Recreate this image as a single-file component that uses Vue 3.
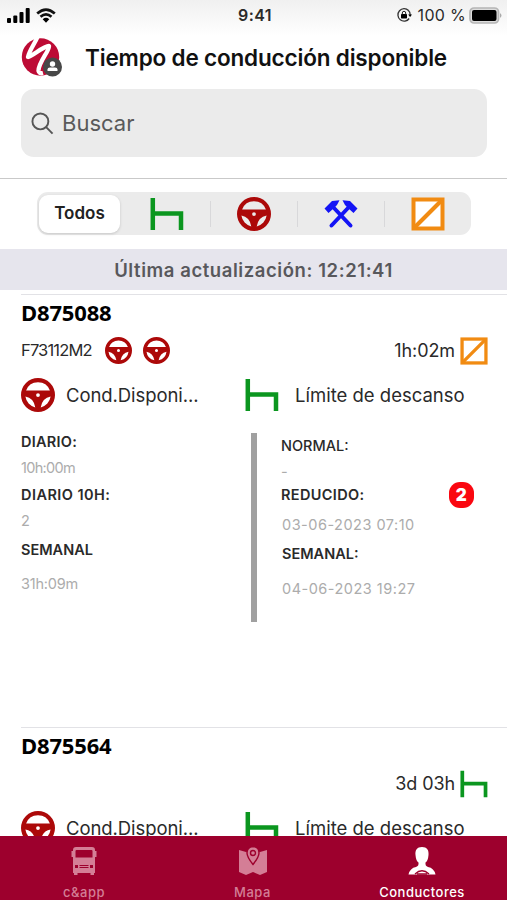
<template>
  <div class="screen">
    <!-- Shared icon shapes -->
    <svg class="sprite" aria-hidden="true">
      <symbol id="wheel" viewBox="0 0 34 34">
        <path fill="currentColor" fill-rule="evenodd" d="M17 0a17 17 0 1 0 0 34a17 17 0 1 0 0-34ZM5.100 12.600A12.700 12.700 0 0 1 28.900 12.600ZM4.400 18.600Q12.600 20 14.300 29.400A12.800 12.800 0 0 1 4.400 18.600ZM29.600 18.600Q21.400 20 19.700 29.400A12.800 12.800 0 0 0 29.600 18.600ZM17 15.200a1.900 1.900 0 1 0 0 3.800a1.900 1.900 0 1 0 0-3.800Z" />
      </symbol>
      <symbol id="bed" viewBox="0 0 34 34">
        <path d="M2.800 1V33M2.800 16.500H31V33" fill="none" stroke="currentColor" stroke-width="4.500" />
      </symbol>
      <symbol id="available" viewBox="0 0 34 34">
        <rect x="2.500" y="2.500" width="29" height="29" fill="#fff" stroke="currentColor" stroke-width="4" />
        <path d="M3.500 30.500L30.500 3.500" stroke="currentColor" stroke-width="4" />
      </symbol>
      <symbol id="hammers" viewBox="0 0 34 30">
        <path d="M7.500 26.500L24 9M26.500 26.500L10 9" stroke="currentColor" stroke-width="4" stroke-linecap="round" />
        <path d="M.5 9.500L8 2L15.500 1.300L13 6L9.500 9.500L4.500 14ZM33.500 9.500L26 2L18.500 1.300L21 6L24.500 9.500L29.500 14Z" fill="currentColor" />
      </symbol>
    </svg>

    <!-- Status bar -->
    <div class="status-bar">
      <div class="status-left">
        <svg class="signal" viewBox="0 0 23 15">
          <rect x="0" y="10" width="4" height="5" rx="1" />
          <rect x="6.300" y="7.500" width="4" height="7.500" rx="1" />
          <rect x="12.500" y="4" width="4" height="11" rx="1" />
          <rect x="18.700" y="0" width="4" height="15" rx="1" />
        </svg>
        <svg class="wifi" viewBox="0 0 20 15">
          <path d="M1.200 5.500Q10-2.300 18.800 5.500M4.500 8.700Q10 4 15.500 8.700" fill="none" stroke="#111" stroke-width="2.700" />
          <path d="M6.700 11.200Q10 8.500 13.300 11.200L10 14.800Z" />
        </svg>
      </div>
      <span class="clock">9:41</span>
      <div class="status-right">
        <svg class="lock" viewBox="0 0 16 16">
          <path d="M12.500 3.500A6.200 6.200 0 1 0 13.200 11.500M12 3A6.200 6.200 0 0 1 14.200 8" fill="none" stroke="#333" stroke-width="1.300" />
          <path d="M12.200 7.500H16L14.100 10Z" />
          <rect x="5" y="7" width="6" height="4.500" rx=".7" />
          <path d="M6.300 7.500V6a1.700 1.700 0 0 1 3.400 0V7.500" fill="none" stroke="#222" />
        </svg>
        <span class="percent">100 %</span>
        <svg class="battery" viewBox="0 0 34 17">
          <rect x="1" y="1" width="28.500" height="15" rx="4" fill="#ddd" stroke="#b5b5b5" stroke-width="1.700" />
          <rect x="3" y="3" width="24.500" height="11" rx="2" />
          <path d="M31 6Q34 8.500 31 11Z" fill="#aaa" />
        </svg>
      </div>
    </div>

    <header class="header">
      <svg class="logo" viewBox="0 0 42 40">
        <circle cx="19.500" cy="19" r="18.700" fill="#bd0b35" />
        <path d="M16.500-1C14 5 8 13 7 19C11 19 22 8 28 8C29 12 17 25 17.500 33Q18 36 22 35" fill="none" stroke="#fff" stroke-width="4.300" stroke-linejoin="round" />
        <circle cx="31.500" cy="29" r="9.500" fill="#484848" />
        <circle cx="31.500" cy="26" r="2.700" fill="#fff" />
        <path d="M26.500 33V31.500Q26.500 29.500 29 29.500H34Q36.500 29.500 36.500 31.500V33Z" fill="#fff" />
      </svg>
      <h1>Tiempo de conducción disponible</h1>
    </header>

    <div class="search">
      <svg viewBox="0 0 24 24">
        <circle cx="9.800" cy="9.800" r="8.300" />
        <path d="M15.800 15.800L22.500 22.500" />
      </svg>
      <span>Buscar</span>
    </div>

    <!-- Activity filter -->
    <div class="filter-wrap">
      <div class="filter">
        <button class="segment all">Todos</button>
        <button class="segment green"><svg><use href="#bed" /></svg></button>
        <button class="segment red line"><svg><use href="#wheel" /></svg></button>
        <button class="segment blue line"><svg class="tools"><use href="#hammers" /></svg></button>
        <button class="segment orange line"><svg><use href="#available" /></svg></button>
      </div>
    </div>

    <div class="updated"><span>Última actualización: 12:21:41</span></div>

    <main class="drivers">
      <article v-for="driver in drivers" :key="driver.id" class="driver">
        <h2>{{ driver.id }}</h2>
        <div class="summary">
          <span class="plate">{{ driver.plate }}</span>
          <template v-if="driver.plate">
            <svg class="small red"><use href="#wheel" /></svg>
            <svg class="small red"><use href="#wheel" /></svg>
          </template>
          <span class="elapsed">{{ driver.elapsed }}</span>
          <svg class="state" :class="driver.color"><use :href="driver.icon" /></svg>
        </div>
        <div class="captions">
          <svg class="red"><use href="#wheel" /></svg>
          <span class="driving">Cond.Disponi...</span>
          <svg class="green"><use href="#bed" /></svg>
          <span class="rest">Límite de descanso</span>
        </div>
        <div v-if="driver.plate" class="details">
          <dl class="left">
            <dt>DIARIO:</dt>
            <dd class="tight">10h:00m</dd>
            <dt>DIARIO 10H:</dt>
            <dd>2</dd>
            <dt>SEMANAL</dt>
            <dd class="week">31h:09m</dd>
          </dl>
          <div class="divider"></div>
          <dl class="right">
            <dt class="normal">NORMAL:</dt>
            <dd>-</dd>
            <dt class="reduced"><span>REDUCIDO:</span><b>2</b></dt>
            <dd class="date">03-06-2023 07:10</dd>
            <dt class="weekly">SEMANAL:</dt>
            <dd class="date last">04-06-2023 19:27</dd>
          </dl>
        </div>
      </article>
    </main>

    <nav class="tabs">
      <a class="tab">
        <svg viewBox="0 0 28 28">
          <path fill-rule="evenodd" d="M6 0H22Q25 0 25 3V12H3V3Q3 0 6 0ZM6.500 3Q5.500 3 5.500 4V10.500H22.500V4Q22.500 3 21.500 3Z" />
          <path d="M1.500 4H4V10H1.500ZM24 4H26.500V10H24Z" />
          <path fill-rule="evenodd" d="M3 12H25V26H24V28H20.500V26H7.500V28H4V26H3ZM5 18V21H8V18ZM9.500 18V19H18.500V18ZM9.500 20V21H18.500V20ZM20 18V21H23V18Z" />
        </svg>
        <span>c&amp;app</span>
      </a>
      <a class="tab">
        <svg viewBox="0 0 28 28">
          <path d="M0 3L7 5L14 3L21 5L28 3V25L21 28L14 25L7 28L0 25Z" />
          <path fill-rule="evenodd" d="M14-.5Q20 0 20 6Q20 10 14 17.500Q8 10 8 6Q8 0 14-.5ZM14 3.500a2.500 2.500 0 1 0 0 5a2.500 2.500 0 1 0 0-5Z" stroke="#9d002d" stroke-width="1.400" />
        </svg>
        <span>Mapa</span>
      </a>
      <a class="tab active">
        <svg viewBox="0 0 28 28">
          <path d="M14 0C19 0 21 3 20.500 8Q20 14 17.500 15.500Q17 19 20 20Q26 21 27.500 27.500H.5Q2 21 8 20Q11 19 10.500 15.500Q8 14 7.500 8C7 3 9 0 14 0Z" />
          <path d="M7 27Q14 20.500 21 27M9 27H19" fill="none" stroke="#9d002d" stroke-width="1.300" />
        </svg>
        <span>Conductores</span>
      </a>
    </nav>
  </div>
</template>

<script setup>
const drivers = [
  { id: 'D875088', plate: 'F73112M2', elapsed: '1h:02m', icon: '#available', color: 'orange' },
  { id: 'D875564', plate: '', elapsed: '3d 03h', icon: '#bed', color: 'green' },
]
</script>

<style>
body {
  background: #fff;
  overflow: hidden;
}
</style>

<style scoped>
.screen {
  width: 507px;
  height: 900px;
  display: flex;
  flex-direction: column;
  overflow: hidden;
  background: linear-gradient(#f0f0f0, #fff 36px);
  color: #2a2a2a;
  font-family: Inter, "Liberation Sans", sans-serif;
  white-space: nowrap;
}

.screen * {
  box-sizing: border-box;
}

.sprite {
  width: 0;
  height: 0;
  position: absolute;
}

.status-bar {
  height: 30px;
  flex: none;
  display: grid;
  grid-template-columns: 1fr auto 1fr;
  align-items: center;
  padding: 0 4px 0 7px;
}

.status-left,
.status-right {
  display: flex;
  align-items: center;
}

.status-right {
  justify-content: flex-end;
}

.signal {
  width: 23px;
  height: 15px;
}

.wifi {
  width: 20px;
  height: 15px;
  margin-left: 6px;
}

.clock {
  font-size: 16px;
  font-weight: 600;
  letter-spacing: 0.4px;
}

.lock {
  width: 16px;
  height: 16px;
  margin-right: 6px;
}

.percent {
  font-size: 16px;
  letter-spacing: 0.3px;
  margin-right: 3px;
}

.battery {
  width: 34px;
  height: 17px;
}

.header {
  height: 59px;
  flex: none;
  display: flex;
  align-items: center;
  padding: 0 0 3px 21px;
}

.logo {
  width: 42px;
  height: 40px;
}

h1 {
  margin: 0 0 2px 22px;
  font-size: 22.5px;
  font-weight: 600;
  letter-spacing: -0.17px;
  color: #111;
}

.search {
  height: 68px;
  flex: none;
  margin: 0 20px 0 21px;
  padding-left: 10px;
  display: flex;
  align-items: center;
  border-radius: 13px;
  background: #ebebeb;
  color: #5a5a5a;
  font-size: 22px;
}

.search svg {
  width: 23px;
  height: 23px;
  margin-right: 8px;
  fill: none;
  stroke: #555;
  stroke-width: 2;
}

.filter-wrap {
  height: 71px;
  flex: none;
  margin-top: 21px;
  padding: 13px 36px 0 37px;
  border-top: 1px solid #c9c9c9;
}

.filter {
  height: 43px;
  display: flex;
  align-items: center;
  border-radius: 11px;
  background: #ebebeb;
}

.segment {
  width: 87px;
  height: 26px;
  padding: 0;
  border: 0;
  display: flex;
  align-items: center;
  justify-content: center;
  background: none;
  font-family: inherit;
}

.segment.line {
  border-left: 1px solid #d8d8da;
}

.segment.all {
  width: 81px;
  height: 38px;
  margin: 0 3px 0 2px;
  padding-bottom: 2px;
  border-radius: 9px;
  background: #fff;
  box-shadow: 0 1px 3px rgba(0, 0, 0, 0.16);
  font-size: 17px;
  font-weight: 600;
  color: #222;
}

.segment svg {
  width: 34px;
  height: 34px;
  flex: none;
}

.segment .tools {
  height: 30px;
}

.green {
  color: #0b961f;
}

.red {
  color: #ac0909;
}

.blue {
  color: #1414f5;
}

.orange {
  color: #f18b12;
}

.updated {
  height: 41px;
  flex: none;
  display: flex;
  align-items: center;
  justify-content: center;
  background: #e6e5ed;
  color: #58585c;
  font-size: 18.500px;
  font-weight: 600;
  letter-spacing: 0.57px;
}

.drivers {
  flex: 1;
  min-height: 0;
  overflow: hidden;
  padding: 4px 0 0 21px;
}

.driver {
  height: 433px;
  border-top: 1px solid #e2e2e6;
}

h2 {
  height: 37px;
  margin: 0;
  font: 700 22px/35px "Noto Sans", sans-serif;
  letter-spacing: -0.15px;
  color: #000;
}

.summary {
  height: 37px;
  display: flex;
  align-items: center;
  padding-right: 19px;
}

.plate {
  font-size: 16.5px;
  letter-spacing: -0.85px;
  margin-right: 2px;
  padding-bottom: 2px;
}

.small {
  width: 27px;
  height: 27px;
  margin-left: 11px;
}

.elapsed {
  margin-left: auto;
  font-size: 18px;
  letter-spacing: -0.1px;
}

.state {
  width: 28px;
  height: 28px;
  margin-left: 5px;
}

.captions {
  height: 52px;
  display: flex;
  align-items: center;
  font-size: 18.500px;
}

.captions svg {
  width: 34px;
  height: 34px;
  flex: none;
}

.driving {
  width: 190px;
  padding-left: 11px;
  letter-spacing: -0.07px;
}

.rest {
  margin-left: 16px;
}

.details {
  height: 203px;
  display: flex;
  padding-top: 12px;
}

dl {
  margin: 0;
  display: flex;
  flex-direction: column;
}

dt {
  font-size: 14.5px;
  line-height: 18px;
  font-weight: 600;
}

dd {
  margin: 0;
  font-size: 14.500px;
  line-height: 18px;
  color: #acacac;
}

.left {
  width: 230px;
}

.left dt:nth-of-type(1) {
  letter-spacing: 0.25px;
}

.left dt:nth-of-type(2) {
  margin-top: 9px;
  letter-spacing: 0.45px;
}

.left dt:nth-of-type(3) {
  margin-top: 11px;
}

.left dd {
  margin-top: 8px;
}

.left .week {
  margin-top: 16px;
  letter-spacing: -0.2px;
}

.left .tight {
  letter-spacing: -0.7px;
}

.divider {
  width: 6px;
  height: 189px;
  background: #a0a0a0;
}

.right {
  width: 196px;
  padding: 4px 0 0 24px;
}

.right .normal {
  font-weight: 500;
}

.right dd {
  margin-top: 8px;
}

.right .reduced {
  height: 26px;
  margin-top: 1px;
  margin-right: -21px;
  display: flex;
  align-items: center;
  justify-content: space-between;
  letter-spacing: 0.35px;
}

.reduced b {
  width: 25px;
  height: 26px;
  border-radius: 11px;
  background: #fa0710;
  color: #fff;
  font-size: 17px;
  line-height: 26px;
  text-align: center;
}

.right .weekly {
  margin: 11px 0 0 1px;
}

.right .date {
  margin-left: 1px;
  letter-spacing: 0.5px;
}

.right .last {
  margin-top: 17px;
}

.tabs {
  height: 64px;
  flex: none;
  display: flex;
  background: #9d002d;
  color: #d47e96;
}

.tab {
  width: 169px;
  padding-top: 11px;
  display: flex;
  flex-direction: column;
  align-items: center;
  font-size: 13px;
  font-weight: 500;
  letter-spacing: 0.5px;
}

.tab:first-child {
  width: 168px;
}

.tab svg {
  width: 28px;
  height: 28px;
  margin-bottom: 9px;
  fill: currentColor;
}

.tab.active {
  width: 170px;
  color: #fff;
}
</style>
